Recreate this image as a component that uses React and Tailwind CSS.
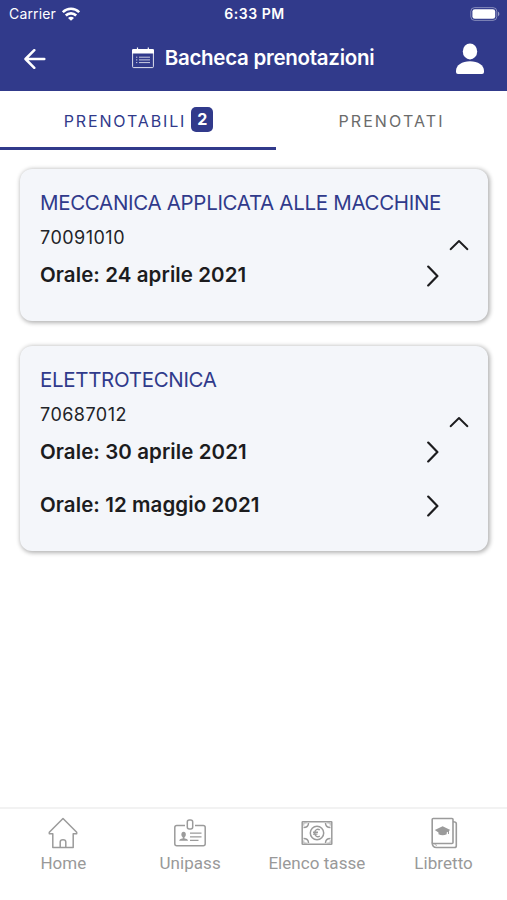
const exams = [
  { name: 'MECCANICA APPLICATA ALLE MACCHINE', code: '70091010', dates: ['Orale: 24 aprile 2021'] },
  { name: 'ELETTROTECNICA', code: '70687012', dates: ['Orale: 30 aprile 2021', 'Orale: 12 maggio 2021'] },
];

const navItems = [
  { label: 'Home', Icon: HomeIcon },
  { label: 'Unipass', Icon: BadgeIcon },
  { label: 'Elenco tasse', Icon: BanknoteIcon },
  { label: 'Libretto', Icon: BookIcon },
];

function WifiIcon() {
  return (
    <svg width="18" height="14" viewBox="0 0 18 14" fill="none" stroke="#fff" strokeWidth="2.6">
      <path d="M.8 5.2C5.4.6 12.6.6 17.2 5.2" />
      <path d="M3.8 8.5c2.9-2.9 7.5-2.9 10.4 0" />
      <path d="M9 13.8 6 10.9c1.7-1.6 4.3-1.6 6 0Z" fill="#fff" stroke="none" />
    </svg>
  );
}

function BatteryIcon() {
  return (
    <svg width="30" height="14" viewBox="0 0 30 14" fill="none">
      <rect x="0.8" y="0.6" width="26" height="12.8" rx="3.8" stroke="#fff" strokeOpacity="0.4" />
      <rect x="2.4" y="2.2" width="22.8" height="9.6" rx="2.4" fill="#fff" />
      <path d="M28 4.8c1.8.6 1.8 3.8 0 4.4Z" fill="#fff" fillOpacity="0.5" />
    </svg>
  );
}

function ArrowLeftIcon() {
  return (
    <svg width="22" height="20" viewBox="0 0 22 20" fill="none" stroke="#fff" strokeWidth="2.5" strokeLinecap="round" strokeLinejoin="round">
      <path d="M10.3 1.2 1.5 10l8.8 8.8M1.8 10h18.5" />
    </svg>
  );
}

function CalendarIcon() {
  return (
    <svg width="22" height="22" viewBox="0 0 22 22" fill="none" stroke="#fff">
      <path d="M0 6.4V3.3Q0 2 1.300 2h19.400q1.300 0 1.300 1.300v3.100Z" fill="#fff" stroke="none" />
      <path d="M5.500.6v3M16.300.6v3" strokeWidth="1.2" />
      <rect x="0.6" y="3" width="20.8" height="17.6" rx="1" strokeOpacity="0.85" />
      <path d="M7 10.2h11M7 12.900h11M7 15.600h11" strokeOpacity="0.75" />
      <path d="M4 10.200h1.300M4 12.900h1.300M4 15.600h1.300" strokeOpacity="0.75" />
    </svg>
  );
}

function UserIcon() {
  return (
    <svg width="28" height="32" viewBox="0 0 28 32" fill="#fff">
      <ellipse cx="14" cy="8.4" rx="7.2" ry="8" />
      <path d="M0 29v-1.200C0 22 6 18.200 14 18.200S28 22 28 27.800v1.200q0 2-2 2H2q-2 0-2-2Z" />
    </svg>
  );
}

function ChevronUp() {
  return (
    <svg width="20" height="12" viewBox="0 0 20 12" fill="none" stroke="#1c1c1e" strokeWidth="1.9" strokeLinecap="round" strokeLinejoin="round">
      <path d="M1.600 10.200 10 2l8.400 8.200" />
    </svg>
  );
}

function ChevronRight() {
  return (
    <svg width="12" height="22" viewBox="0 0 12 22" fill="none" stroke="#1c1c1e" strokeWidth="2.2" strokeLinecap="round" strokeLinejoin="round">
      <path d="M1.200 1.600 10.400 11l-9.200 9.400" />
    </svg>
  );
}

function HomeIcon() {
  return (
    <svg width="32" height="32" viewBox="0 0 32 32" fill="none" stroke="#9b9b9b" strokeWidth="1.5" strokeLinejoin="round">
      <path d="M16 1.500 2.300 15.300v1.500h3.500v13.700h20.400V16.800h3.500v-1.500Z" />
      <path d="M13.200 30.500v-5.600q0-2.200 2.800-2.200t2.800 2.200v5.600" />
    </svg>
  );
}

function BadgeIcon() {
  return (
    <svg width="32" height="32" viewBox="0 0 32 32" fill="none" stroke="#9b9b9b" strokeWidth="1.5">
      <path d="M11 8.600H2.800q-2 0-2 2v16.200q0 2 2 2h26.400q2 0 2-2V10.600q0-2-2-2H21" />
      <rect x="13.3" y="3" width="5.4" height="9" rx="2" />
      <ellipse cx="9.600" cy="17.500" rx="2.200" ry="2.800" fill="#9b9b9b" stroke="none" />
      <path d="M8.700 19h1.800v2.500q3.500.5 3.500 2.300H5.200q0-1.800 3.500-2.300Z" fill="#9b9b9b" stroke="none" />
      <path d="M16 16.200h11.500M16 19.800h11.500M16 23.400h8.500" strokeWidth="1.2" />
    </svg>
  );
}

function BanknoteIcon() {
  return (
    <svg width="32" height="32" viewBox="0 0 32 32" fill="none" stroke="#9b9b9b" strokeWidth="1.5">
      <rect x="1.200" y="4.700" width="29.600" height="22.600" rx="0.5" />
      <path d="M2.500 10.500q5 0 5-4.500M29.500 10.500q-5 0-5-4.500M2.500 21.500q5 0 5 4.500M29.500 21.500q-5 0-5 4.500" />
      <path d="M2.800 8.700V6h2.900M29.200 8.700V6h-2.900M2.800 23.300V26h2.900M29.200 23.300V26h-2.900" strokeWidth="0.7" />
      <circle cx="16" cy="16" r="6.700" />
      <path d="M18.800 12.900c-2.700-1.700-5.100.2-5.100 3.100s2.400 4.800 5.100 3.100M12 15.200h5M12 17.100h4.500" strokeWidth="1.4" />
    </svg>
  );
}

function BookIcon() {
  return (
    <svg width="32" height="32" viewBox="0 0 32 32" fill="none" stroke="#9b9b9b" strokeWidth="1.6" strokeLinejoin="round">
      <rect x="4.200" y="1.500" width="20.800" height="25" rx="1" />
      <path d="M4.200 25.500c0 3 1.800 5 4.300 5h18q1.800 0 1.800-1.800V6.500q0-1.800-3.300-1.800" />
      <path d="M6.700 26.500c.3 1.300 1 1.800 2.200 1.800" strokeWidth="0.9" />
      <path d="m14.600 9.300 7.800 3.700-1.400.8v3.200h-1v-2.300l-1.300.7v1.800q-4 2-8.200 0v-1.800L6.800 13Z" fill="#9b9b9b" stroke="none" />
    </svg>
  );
}

function ExamCard({ exam }) {
  return (
    <section className="flex rounded-xl bg-[#f4f6fa] pl-5 pt-[11px] pb-[18.5px] shadow-[1px_1px_4px_1px_rgba(0,0,0,0.3)]">
      <div className="w-[401px] shrink-0">
        <h2 className="h-[47px] whitespace-nowrap text-[20.5px] leading-[46px] tracking-[-0.32px] text-[#303a8b]">{exam.name}</h2>
        <p className="h-[22px] text-[18px] leading-[21.5px] tracking-[0.48px] text-[#222428]">{exam.code}</p>
        {exam.dates.map((date) => (
          <button key={date} className="flex h-[53.5px] w-full items-center justify-between pr-0.5 text-[20.5px] font-semibold tracking-[0.08px] text-[#1c1c1e]">
            {date}
            <ChevronRight />
          </button>
        ))}
      </div>
      <button className="flex h-12 w-9 items-start justify-center pt-[59px]">
        <ChevronUp />
      </button>
    </section>
  );
}

export default function App() {
  return (
    <div className="flex h-[900px] w-[507px] flex-col bg-white font-['Inter','Liberation_Sans',sans-serif]">
      <header className="h-[91px] bg-[#313a8b] text-white">
        <div className="grid h-[27px] grid-cols-3 items-center pl-[9px] pr-[7px] text-[14px]">
          <div className="flex items-center gap-1.5">
            <span className="tracking-[0.15px]">Carrier</span>
            <WifiIcon />
          </div>
          <span className="text-center font-semibold tracking-[0.55px]">6:33 PM</span>
          <div className="flex justify-end">
            <BatteryIcon />
          </div>
        </div>
        <div className="flex h-[63px] items-center justify-between pl-6 pr-[23px]">
          <button><ArrowLeftIcon /></button>
          <div className="flex items-center gap-[11px] pl-1">
            <span className="pb-0.5"><CalendarIcon /></span>
            <h1 className="text-[20.5px] font-semibold tracking-[-0.27px]">Bacheca prenotazioni</h1>
          </div>
          <button className="pt-px"><UserIcon /></button>
        </div>
      </header>

      <div className="flex h-[59px] text-[16px]">
        <button className="flex w-[276px] items-center justify-center gap-[5px] border-b-[3px] border-[#313a8b] pl-px pt-[3px] tracking-[1.85px] text-[#313a8b]">
          PRENOTABILI
          <span className="mb-[3px] flex h-[25px] w-[22px] items-center justify-center rounded-[5px] bg-[#313a8b] pb-px text-[16px] font-bold tracking-normal text-white">2</span>
        </button>
        <button className="flex-1 tracking-[2.1px] text-[#6b6b6b]">PRENOTATI</button>
      </div>

      <main className="flex flex-1 flex-col gap-[24.5px] pl-5 pr-[19px] pt-[19px]">
        {exams.map((exam) => (
          <ExamCard key={exam.code} exam={exam} />
        ))}
      </main>

      <nav className="grid h-[93px] grid-cols-4 border-t-2 border-[#f2f2f2] pt-2 font-['Roboto','Liberation_Sans',sans-serif] text-[17px] text-[#999]">
        {navItems.map(({ label, Icon }) => (
          <button key={label} className="flex flex-col items-center gap-1 self-start leading-[20px] tracking-[0.05px]">
            <Icon />
            {label}
          </button>
        ))}
      </nav>
    </div>
  );
}
